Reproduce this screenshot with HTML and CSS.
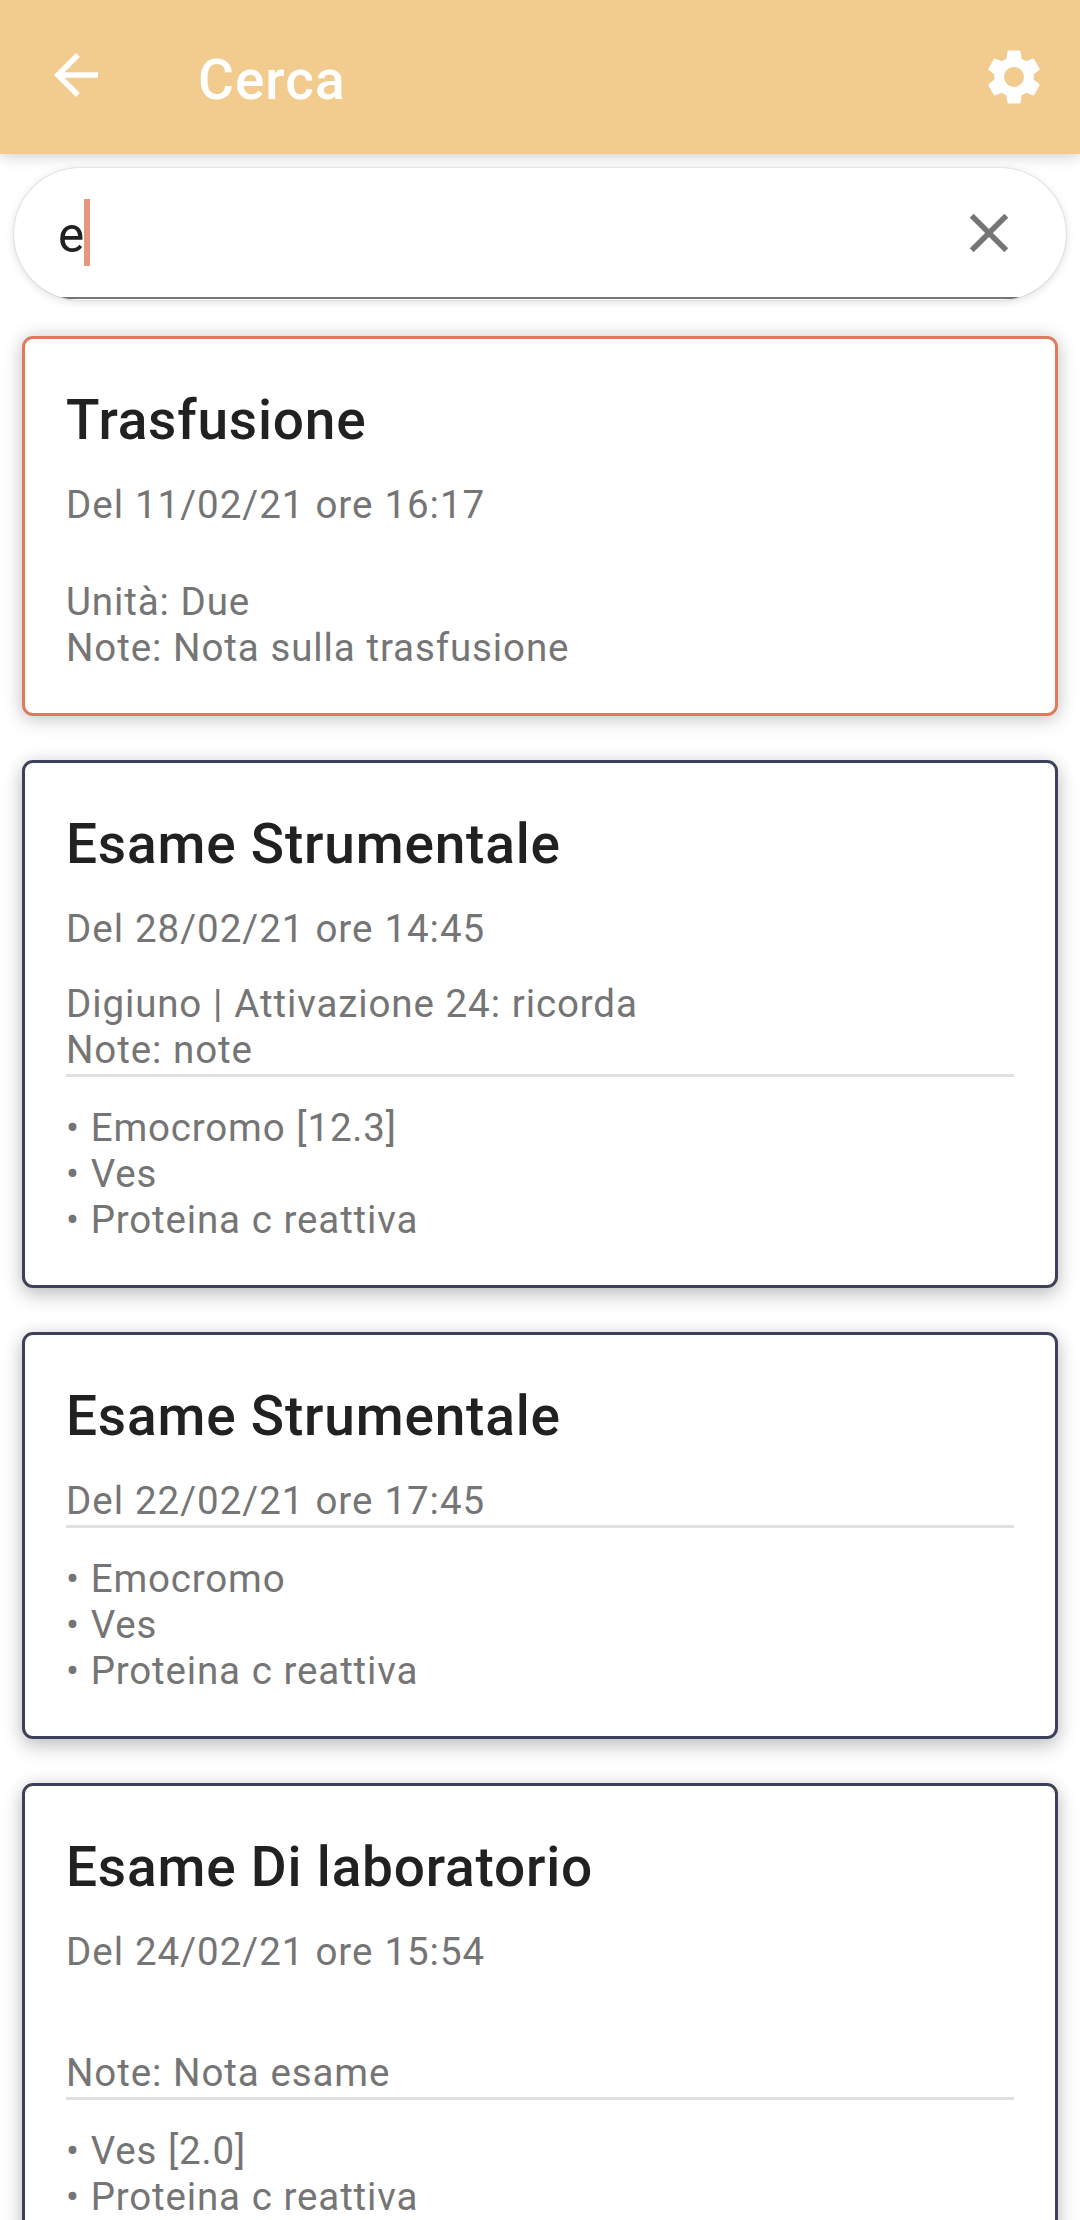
FILE: index.html
```html
<!DOCTYPE html>
<html lang="it">
<head>
<meta charset="utf-8">
<title>Cerca</title>
<link rel="stylesheet" href="styles.css">
</head>
<body>
<header class="app-bar">
  <svg class="icon back" viewBox="0 0 24 24"><path d="M20 11H7.83l5.59-5.59L12 4l-8 8 8 8 1.41-1.41L7.83 13H20v-2z"/></svg>
  <h1 class="app-title">Cerca</h1>
  <svg class="icon settings" viewBox="0 0 24 24"><path d="M19.14 12.94c.04-.3.06-.61.06-.94 0-.32-.02-.64-.07-.94l2.03-1.58c.18-.14.23-.41.12-.61l-1.92-3.32c-.12-.22-.37-.29-.59-.22l-2.39.96c-.5-.38-1.03-.7-1.62-.94l-.36-2.54c-.04-.24-.24-.41-.48-.41h-3.84c-.24 0-.43.17-.47.41l-.36 2.54c-.59.24-1.13.57-1.62.94l-2.39-.96c-.22-.08-.47 0-.59.22L2.74 8.87c-.12.21-.08.47.12.61l2.03 1.58c-.05.3-.09.63-.09.94s.02.64.07.94l-2.03 1.58c-.18.14-.23.41-.12.61l1.92 3.32c.12.22.37.29.59.22l2.39-.96c.5.38 1.03.7 1.62.94l.36 2.54c.05.24.24.41.48.41h3.84c.24 0 .44-.17.47-.41l.36-2.54c.59-.24 1.13-.56 1.62-.94l2.39.96c.22.08.47 0 .59-.22l1.92-3.32c.12-.22.07-.47-.12-.61l-2.01-1.58zM12 15.6c-1.98 0-3.6-1.62-3.6-3.6s1.62-3.6 3.6-3.6 3.6 1.62 3.6 3.6-1.62 3.6-3.6 3.6z"/></svg>
</header>
<div class="search">
  <div class="field">
    <span class="query">e</span><span class="caret"></span>
    <svg class="icon clear" viewBox="0 0 24 24"><path d="M19 6.41L17.59 5 12 10.59 6.41 5 5 6.41 10.59 12 5 17.59 6.41 19 12 13.41 17.59 19 19 17.59 13.41 12z"/></svg>
  </div>
</div>
<main class="results">
  <article class="card transfusion">
    <h2 class="title">Trasfusione</h2>
    <p class="text date">Del 11/02/21 ore 16:17</p>
    <p class="text details spaced">Unità: Due<br>Note: Nota sulla trasfusione</p>
  </article>
  <article class="card">
    <h2 class="title">Esame Strumentale</h2>
    <p class="text date">Del 28/02/21 ore 14:45</p>
    <p class="text details">Digiuno | Attivazione 24: ricorda<br>Note: note</p>
    <hr class="divider">
    <p class="text">• Emocromo [12.3]<br>• Ves<br>• Proteina c reattiva</p>
  </article>
  <article class="card">
    <h2 class="title">Esame Strumentale</h2>
    <p class="text date">Del 22/02/21 ore 17:45</p>
    <hr class="divider">
    <p class="text">• Emocromo<br>• Ves<br>• Proteina c reattiva</p>
  </article>
  <article class="card">
    <h2 class="title">Esame Di laboratorio</h2>
    <p class="text date">Del 24/02/21 ore 15:54</p>
    <p class="text details"><br>Note: Nota esame</p>
    <hr class="divider">
    <p class="text">• Ves [2.0]<br>• Proteina c reattiva</p>
  </article>
</main>
</body>
</html>
```
FILE: styles.css
```css
* {
  box-sizing: border-box;
}

body {
  margin: 0;
  height: 2220px;
  overflow: hidden;
  display: flex;
  flex-direction: column;
  background: #fff;
  font-family: Roboto, sans-serif;
  color: #212121;
}

h1, h2, p {
  margin: 0;
}

.icon {
  width: 66px;
  height: 66px;
  flex: none;
  fill: currentColor;
}

.app-bar {
  flex: none;
  height: 154px;
  padding: 42px 33px 0 43px;
  display: flex;
  align-items: flex-start;
  background: #f2cc8f;
  color: #fff;
  box-shadow: 0 2px 14px rgba(0, 0, 0, .2);
}

.app-title {
  margin: 6px auto 0 89px;
  font-size: 55px;
  font-weight: 500;
  line-height: 64px;
  letter-spacing: .018em;
}

.settings {
  margin-top: 2px;
}

.search {
  flex: none;
  height: 132px;
  margin: 14px 14px 36px;
  border-radius: 66px;
  background: #fff;
  box-shadow: 0 0 2px rgba(0, 0, 0, .22), 0 2px 10px rgba(0, 0, 0, .13);
  overflow: hidden;
}

.field {
  height: 131px;
  padding: 0 44px;
  display: flex;
  align-items: center;
  border-bottom: 2px solid #757575;
}

.query {
  font-size: 49.5px;
  line-height: 58px;
  padding-top: 4px;
}

.caret {
  width: 6px;
  height: 67px;
  background: #e69780;
}

.clear {
  margin-left: auto;
  color: #757575;
}

.results {
  flex: none;
  padding: 0 22px;
  display: flex;
  flex-direction: column;
  gap: 44px;
}

.card {
  padding: 49px 41px 42px;
  border: 3px solid #3d405b;
  border-radius: 11px;
  background: #fff;
  box-shadow: 0 8px 20px rgba(0, 0, 0, .2), 0 0 16px rgba(0, 0, 0, .1);
}

.transfusion {
  border-color: #e07a5f;
  box-shadow: 0 4px 20px rgba(0, 0, 0, .17), 0 0 16px rgba(0, 0, 0, .1);
}

.title {
  margin-bottom: 30px;
  font-size: 55px;
  font-weight: 500;
  line-height: 64px;
  letter-spacing: .0145em;
}

.text {
  font-size: 38.5px;
  line-height: 46px;
  letter-spacing: .84px;
  word-spacing: .46px;
  color: #757575;
}

.date {
  letter-spacing: .98px;
}

.details {
  margin-top: 29px;
  letter-spacing: .88px;
}

.spaced {
  margin-top: 51px;
}

.divider {
  height: 3px;
  margin: 1px 0 28px;
  border: 0;
  background: #e0e0e0;
}
```
